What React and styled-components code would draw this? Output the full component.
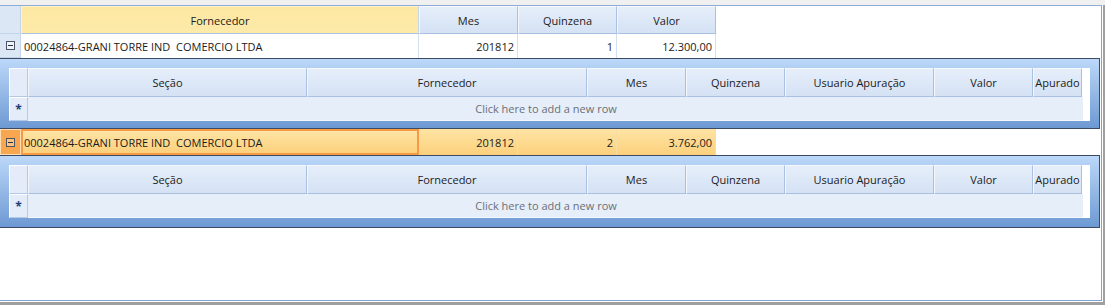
import React from "react";
import styled, { createGlobalStyle, css } from "styled-components";

const GlobalStyle = createGlobalStyle`
  html, body {
    margin: 0;
    padding: 0;
    background: #f0f0f0;
  }
  body {
    font-family: "Open Sans", "Noto Sans", "Liberation Sans", sans-serif;
    font-size: 11px;
    color: #1b1b1b;
  }
`;

const Page = styled.div`
  width: 1105px;
  height: 305px;
  padding-top: 5px;
  box-sizing: border-box;
  overflow: hidden;
`;

const Shell = styled.div`
  width: 1105px;
  height: 300px;
  box-sizing: border-box;
  border-right: 2px solid #a0a0a0;
  border-bottom: 3px solid #a0a0a0;
  background: #ffffff;
`;

const Grid = styled.div`
  width: 1102px;
  height: 296px;
  box-sizing: border-box;
  border-top: 1px solid #8eacd8;
  border-right: 1px solid #7fa2d6;
  border-bottom: 1px solid #7fa2d6;
  background: #ffffff;
  display: flex;
  flex-direction: column;
`;

const Row = styled.div`
  display: flex;
  height: ${(p) => p.$h}px;
  flex-shrink: 0;
`;

const Indicator = styled.div`
  width: ${(p) => p.$w}px;
  flex-shrink: 0;
  box-sizing: border-box;
  display: flex;
  align-items: center;
  justify-content: center;
  border-right: 1px solid #c4d4ea;
  border-bottom: 1px solid #c4d4ea;
  background: #dce7f5;
  ${(p) =>
    p.$selected &&
    css`
      background: #f9a651;
      border: 1px solid #fde0b6;
    `}
  ${(p) =>
    p.$inner &&
    css`
      background: #e3ecf8;
      border: 1px solid #ffffff;
      border-right-color: #b3c8e4;
      border-bottom-color: #b3c8e4;
    `}
`;

const HeadCell = styled.div`
  width: ${(p) => p.$w}px;
  flex-shrink: 0;
  box-sizing: border-box;
  display: flex;
  align-items: center;
  justify-content: center;
  white-space: nowrap;
  overflow: hidden;
  border-right: 1px solid #a9c0e0;
  border-bottom: 1px solid #a9c0e0;
  border-left: 1px solid #f4f8fd;
  border-top: 1px solid #f4f8fd;
  background: linear-gradient(#e6eefa, #d4e2f4);
  ${(p) =>
    p.$sorted &&
    css`
      background: linear-gradient(#fde8a2, #fdeaa9);
      border-left-color: #fff3cc;
      border-top-color: #fff3cc;
      border-right-color: #c7d5e9;
    `}
`;

const Cell = styled.div`
  width: ${(p) => p.$w}px;
  flex-shrink: 0;
  box-sizing: border-box;
  display: flex;
  align-items: center;
  justify-content: ${(p) => (p.$right ? "flex-end" : "flex-start")};
  padding: 0 3px;
  white-space: pre;
  border-right: 1px solid #d3e0f1;
  background: #ffffff;
  ${(p) =>
    p.$selected &&
    css`
      background: linear-gradient(#fee4a4, #fcd07c);
      border-right-color: #f7dca4;
    `}
  ${(p) =>
    p.$focused &&
    css`
      border: 2px solid #f79a45;
      padding: 0 1px;
    `}
`;

const Expander = styled.span`
  width: 9px;
  height: 9px;
  box-sizing: border-box;
  border: 1px solid #4d5566;
  background: ${(p) => (p.$selected ? "#fbc37d" : "#eef3fa")};
  display: flex;
  align-items: center;
  justify-content: center;
  &::after {
    content: "";
    width: 5px;
    height: 1px;
    background: #2d3340;
  }
`;

const Detail = styled.div`
  width: 1100px;
  height: ${(p) => p.$h}px;
  flex-shrink: 0;
  box-sizing: border-box;
  border-top: 1px solid #3d4a63;
  border-bottom: 1px solid #3d4a63;
  border-right: 1px solid #3d4a63;
  background: linear-gradient(#bcd8f9, #6d99d3);
  padding: 9px 0 0 9px;
`;

const Inner = styled.div`
  width: 1081px;
  background: #ffffff;
  display: flex;
  flex-direction: column;
`;

const NewRow = styled.div`
  display: flex;
  height: 24px;
`;

const AddCell = styled.div`
  flex: 1;
  display: flex;
  align-items: center;
  justify-content: center;
  padding-right: 19px;
  background: #e6eef9;
  color: #6b6f78;
  border-bottom: 1px solid #f4f7fc;
  margin-right: 7px;
`;

const Star = styled.span`
  color: #1f3c78;
  font-size: 12px;
  font-weight: 700;
  line-height: 1;
  margin-top: 2px;
`;

const topColumns = [
  { key: "fornecedor", title: "Fornecedor", w: 398, sorted: true },
  { key: "mes", title: "Mes", w: 99, right: true },
  { key: "quinzena", title: "Quinzena", w: 99, right: true },
  { key: "valor", title: "Valor", w: 99, right: true },
];

const detailColumns = [
  { title: "Seção", w: 279 },
  { title: "Fornecedor", w: 280 },
  { title: "Mes", w: 99 },
  { title: "Quinzena", w: 99 },
  { title: "Usuario Apuração", w: 149 },
  { title: "Valor", w: 99 },
  { title: "Apurado", w: 49 },
];

const rows = [
  {
    fornecedor: "00024864-GRANI TORRE IND  COMERCIO LTDA",
    mes: "201812",
    quinzena: "1",
    valor: "12.300,00",
  },
  {
    fornecedor: "00024864-GRANI TORRE IND  COMERCIO LTDA",
    mes: "201812",
    quinzena: "2",
    valor: "3.762,00",
    selected: true,
  },
];

function DetailGrid({ h }) {
  return (
    <Detail $h={h}>
      <Inner>
        <Row $h={29}>
          <Indicator $w={19} $inner />
          {detailColumns.map((c) => (
            <HeadCell key={c.title} $w={c.w}>
              {c.title}
            </HeadCell>
          ))}
        </Row>
        <NewRow>
          <Indicator $w={19} $inner>
            <Star>*</Star>
          </Indicator>
          <AddCell>Click here to add a new row</AddCell>
        </NewRow>
      </Inner>
    </Detail>
  );
}

export default function App() {
  return (
    <>
      <GlobalStyle />
      <Page>
        <Shell>
          <Grid>
            <Row $h={28}>
              <Indicator $w={21} />
              {topColumns.map((c) => (
                <HeadCell key={c.key} $w={c.w} $sorted={c.sorted}>
                  {c.title}
                </HeadCell>
              ))}
            </Row>
            {rows.map((r, i) => (
              <React.Fragment key={i}>
                <Row $h={i === 0 ? 24 : 26}>
                  <Indicator $w={21} $selected={r.selected}>
                    <Expander $selected={r.selected} />
                  </Indicator>
                  {topColumns.map((c) => (
                    <Cell
                      key={c.key}
                      $w={c.w}
                      $right={c.right}
                      $selected={r.selected}
                      $focused={r.selected && c.key === "fornecedor"}
                    >
                      {r[c.key]}
                    </Cell>
                  ))}
                </Row>
                <DetailGrid h={i === 0 ? 71 : 73} />
              </React.Fragment>
            ))}
          </Grid>
        </Shell>
      </Page>
    </>
  );
}
